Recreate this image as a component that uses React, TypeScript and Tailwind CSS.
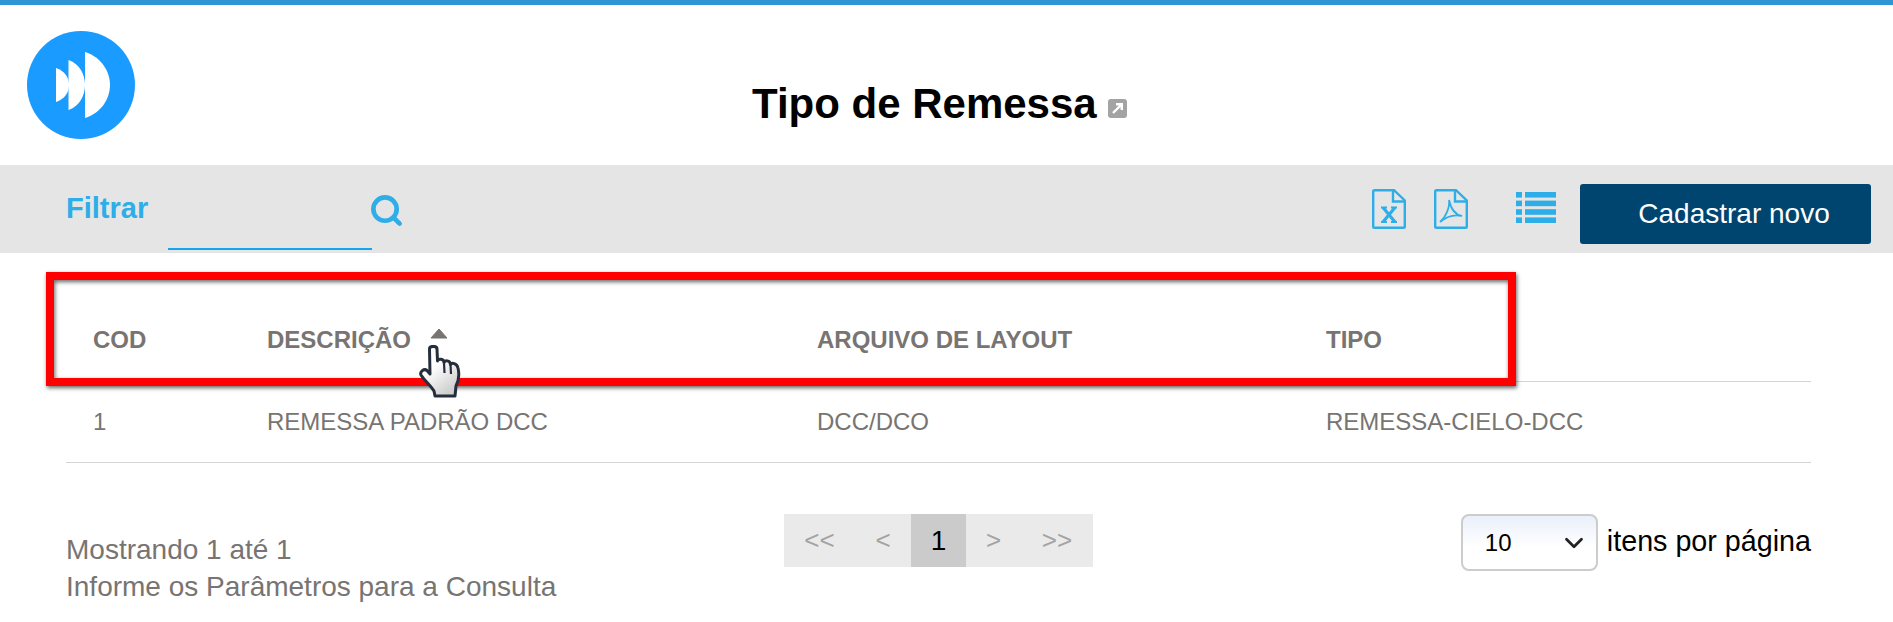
import { ChevronDown, Search } from "lucide-react";

const FONT = "font-['Liberation_Sans',Arial,sans-serif]";

const columns = ["w-[174px]", "w-[550px]", "w-[509px]", "flex-1"];
const headers = ["COD", "DESCRIÇÃO", "ARQUIVO DE LAYOUT", "TIPO"];
const row = ["1", "REMESSA PADRÃO DCC", "DCC/DCO", "REMESSA-CIELO-DCC"];

const pages = [
  { label: "<<", cls: "w-[71px] text-[#a3a3a3]" },
  { label: "<", cls: "w-[56px] text-[#a3a3a3]" },
  { label: "1", cls: "w-[55px] bg-[#cbcbcb] text-black text-[28px]" },
  { label: ">", cls: "w-[55px] text-[#a3a3a3]" },
  { label: ">>", cls: "w-[72px] text-[#a3a3a3]" },
];

function Logo() {
  return (
    <svg width="108" height="108" viewBox="0 0 108 108" className="shrink-0">
      <circle cx="54" cy="54" r="54" fill="#1a9bff" />
      <path d="M29 37 C38 40 42 47 42 54 C42 61 38 68 29 71 Z" fill="#fff" />
      <path d="M41.5 29 C53 33 58 44 58 54 C58 64 53 75 41.5 79 Z" fill="#fff" />
      <path d="M58 21 C74 26 83 40 83 54 C83 68 74 82 58 87 Z" fill="#fff" />
    </svg>
  );
}

function FileOutline() {
  return (
    <>
      <path
        d="M2.5 1.2 H22 L32.8 11.5 V37.5 Q32.8 38.8 31.5 38.8 H2.5 Q1.2 38.8 1.2 37.5 V2.5 Q1.2 1.2 2.5 1.2 Z"
        fill="none"
        stroke="#2eaee8"
        strokeWidth="2.4"
      />
      <path d="M21 1.5 V12.5 H32.5" fill="none" stroke="#2eaee8" strokeWidth="2.4" />
    </>
  );
}

function ExcelIcon() {
  return (
    <svg width="34" height="40" viewBox="0 0 34 40">
      <FileOutline />
      <path d="M11 18.5 L23 33 M23 18.5 L11 33" stroke="#2eaee8" strokeWidth="3.2" fill="none" />
      <path d="M9 18.5 H15 M19 18.5 H25 M9 33 H15 M19 33 H25" stroke="#2eaee8" strokeWidth="2" fill="none" />
    </svg>
  );
}

function PdfIcon() {
  return (
    <svg width="34" height="40" viewBox="0 0 34 40">
      <FileOutline />
      <path
        d="M15 11 C16 18 12 28 6 33 C12 28 20 25 28 27 C22 26 17 20 15 11 Z"
        fill="none"
        stroke="#2eaee8"
        strokeWidth="1.8"
      />
    </svg>
  );
}

function ListIcon() {
  return (
    <svg width="40" height="31" viewBox="0 0 40 31" fill="#2eaee8">
      {[0, 8.6, 17.2, 25.4].map((y) => (
        <g key={y}>
          <rect x="0" y={y} width="6" height="5.6" />
          <rect x="9" y={y} width="31" height="5.6" />
        </g>
      ))}
    </svg>
  );
}

function HandCursor() {
  return (
    <svg width="42" height="54" viewBox="0 0 42 54" className="absolute left-[419px] top-[345px]">
      <defs>
        <linearGradient id="hand" x1="0" y1="0" x2="0.6" y2="1">
          <stop offset="0.45" stopColor="#ffffff" />
          <stop offset="1" stopColor="#cfcfcf" />
        </linearGradient>
      </defs>
      <path
        d="M10.5 4 C10.5 0.5 18 0.5 18 4 L18.5 16 C19 13.5 25 13.5 25 17.5 C26 15 31 15 31.5 19.5 C32.5 17.5 38 18 39 23 C40.5 29 39.5 36 37 41 L36 51 L16 51 L15 46 C12 41 6 36 2 30 C0.5 27 5 23 8 25.5 L11 29 Z"
        fill="url(#hand)"
        stroke="#262e3c"
        strokeWidth="3"
        strokeLinejoin="round"
      />
      <path d="M25 17.5 L25.5 28 M31.5 19.5 L32 29" stroke="#262e3c" strokeWidth="2.2" fill="none" />
    </svg>
  );
}

export default function App() {
  return (
    <div className={`relative min-h-[622px] bg-white overflow-hidden ${FONT}`}>
      <div className="h-[5px] bg-[#2e96d2]" />

      <header className="flex h-[160px] items-start pl-[27px] pt-[26px]">
        <Logo />
        <div className="ml-[617px] mt-[50px] flex items-center">
          <h1 className="text-[42px] leading-[46px] font-bold text-black">Tipo de Remessa</h1>
          <span className="ml-[11px] mt-[9px] flex h-[19px] w-[19px] items-center justify-center rounded-[3px] bg-[#a3a3a3]">
            <svg width="13" height="13" viewBox="0 0 13 13">
              <path d="M2 11 L10 3 M5 2.2 H10.8 V8" stroke="#fff" strokeWidth="2.4" fill="none" />
            </svg>
          </span>
        </div>
      </header>

      <div className="flex h-[88px] items-start bg-[#e5e5e5] pl-[66px] pr-[22px]">
        <span className="mt-[27px] w-[102px] text-[29px] leading-[32px] font-bold text-[#2eaee8]">Filtrar</span>
        <div className="h-[85px] w-[204px] border-b-2 border-[#14a5ee]" />
        <Search className="-ml-[3px] mt-[28px] text-[#2eaee8]" size={35} strokeWidth={3.2} />
        <div className="ml-auto mt-[24px] flex items-start">
          <ExcelIcon />
          <div className="ml-[28px]">
            <PdfIcon />
          </div>
          <div className="ml-[48px] mt-[3px]">
            <ListIcon />
          </div>
        </div>
        <button className="ml-[24px] mt-[19px] h-[60px] w-[291px] rounded-[3px] bg-[#004570] pl-[17px] text-[28px] text-white">
          Cadastrar novo
        </button>
      </div>

      <div className="ml-[66px] w-[1745px]">
        <div className="flex h-[129px] items-end border-b border-[#d4d4d4] pb-[27px] pl-[27px]">
          {headers.map((h, i) => (
            <div key={h} className={`${columns[i]} flex items-center text-[24px] leading-[28px] font-bold text-[#777471]`}>
              {h}
              {i === 1 && (
                <svg width="18" height="11" viewBox="0 0 18 11" className="ml-[19px] mb-[13px]">
                  <path d="M9 1 L17 10 H1 Z" fill="#777471" stroke="#777471" strokeLinejoin="round" />
                </svg>
              )}
            </div>
          ))}
        </div>
        <div className="flex h-[81px] items-center border-b border-[#d4d4d4] pl-[27px]">
          {row.map((c, i) => (
            <div key={c} className={`${columns[i]} text-[24px] leading-[28px] text-[#777471]`}>
              {c}
            </div>
          ))}
        </div>

        <div className="flex items-start pt-[51px]">
          <div className="mt-[17px] w-[718px] text-[28px] leading-[37px] text-[#777471]">
            <div>Mostrando 1 até 1</div>
            <div>Informe os Parâmetros para a Consulta</div>
          </div>
          <div className="flex h-[53px] bg-[#eaeaea] text-[26px]">
            {pages.map((p) => (
              <div key={p.label} className={`flex items-center justify-center ${p.cls}`}>
                {p.label}
              </div>
            ))}
          </div>
          <div className="ml-auto flex items-center">
            <div className="flex h-[57px] w-[137px] items-center rounded-[8px] border-2 border-[#cccccc] bg-gradient-to-b from-[#eaf0fa] to-white to-60% pl-[22px] pr-[7px] text-[24px] text-black">
              10
              <ChevronDown className="ml-auto text-[#222]" size={30} strokeWidth={2.2} />
            </div>
            <span className="ml-[9px] -mt-[2px] text-[28.7px] text-black">itens por página</span>
          </div>
        </div>
      </div>

      <div className="absolute left-[46px] top-[272px] h-[114px] w-[1470px] border-8 border-[#ff0000] shadow-[1px_2px_4px_rgba(0,0,0,0.6),inset_1px_2px_4px_rgba(0,0,0,0.6)]" />
      <HandCursor />
    </div>
  );
}
